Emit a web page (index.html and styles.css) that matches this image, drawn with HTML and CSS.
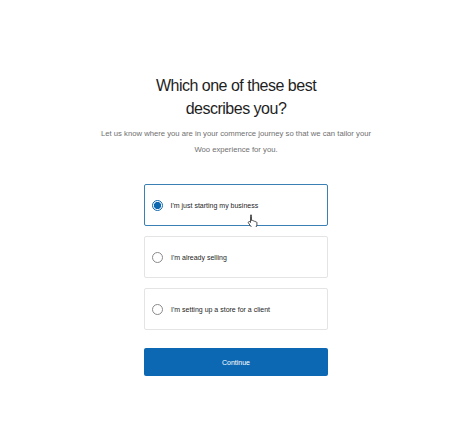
FILE: index.html
```html
<!DOCTYPE html>
<html lang="en">

<head>
    <meta charset="UTF-8">
    <meta name="viewport" content="width=device-width, initial-scale=1.0">
    <title>Business Info</title>
    <link rel="stylesheet" href="styles.css">
</head>

<body>
    <!-- 질문 박스 -->
    <div class="wrap">
        <h1 class="title">Which one of these best<br>describes you?</h1>
        <p class="desc">Let us know where you are in your commerce journey so that we can tailor your<br>Woo experience for you.</p>

        <!-- 선택지 -->
        <div class="choices">
            <label class="choice on">
                <input type="radio" name="stage" checked>
                <span class="dot"></span>
                <span class="label">I'm just starting my business</span>
                <!-- 마우스 커서 -->
                <svg class="cursor" width="12" height="13" viewBox="0 0 12 13">
                    <path d="M3.5 1.2c.6 0 1 .4 1 1v4.3l.4-.1c.5-.2 1 .1 1.2.5.5-.3 1.1-.1 1.3.4.5-.3 1.2 0 1.3.6.6-.2 1.2.2 1.2.9v2.2c0 1.5-1.2 2.7-2.7 2.7H6c-.9 0-1.6-.4-2.1-1.1L1.5 9c-.4-.5-.2-1.2.4-1.4.4-.2.8 0 1.1.3l.5.6V2.2c0-.6.4-1 1-1z" fill="#fff" stroke="#222" stroke-width=".8" stroke-linejoin="round"/>
                </svg>
            </label>
            <label class="choice">
                <input type="radio" name="stage">
                <span class="dot"></span>
                <span class="label">I'm already selling</span>
            </label>
            <label class="choice">
                <input type="radio" name="stage">
                <span class="dot"></span>
                <span class="label">I'm setting up a store for a client</span>
            </label>
        </div>

        <button class="next">Continue</button>
    </div>
</body>

</html>
```

FILE: styles.css
```css
html,
body {
    margin: 0;
    padding: 0;
    background: #fff;
    font-family: "Liberation Sans", Arial, sans-serif;
}

/* 전체 박스 */
.wrap {
    display: flex;
    flex-direction: column;
    align-items: center;
    padding-top: 74px;
    text-align: center;
}

/* 제목 */
.title {
    margin: 0;
    font-size: 16px;
    line-height: 23px;
    font-weight: 400;
    color: #1e1e1e;
    letter-spacing: -0.5px;
}

/* 설명글 */
.desc {
    margin: 6px 0 0;
    font-size: 7.7px;
    line-height: 16px;
    color: #6f6f6f;
}

/* 선택지 목록 */
.choices {
    display: flex;
    flex-direction: column;
    gap: 10px;
    width: 184px;
    margin-top: 26px;
}

.choice {
    position: relative;
    display: flex;
    align-items: center;
    gap: 8px;
    height: 42px;
    box-sizing: border-box;
    padding-left: 7px;
    border: 1px solid #e4e4e4;
    border-radius: 2px;
    text-align: left;
    cursor: pointer;
}

/* 선택된 카드 */
.choice.on {
    border: 1.5px solid #3a80b5;
    padding-left: 6.5px;
}

.choice input {
    display: none;
}

/* 라디오 동그라미 */
.dot {
    width: 11px;
    height: 11px;
    box-sizing: border-box;
    border: 1px solid #8a8a8a;
    border-radius: 50%;
    flex-shrink: 0;
}

.choice.on .dot {
    border: 1.5px solid #0d68b0;
    background: radial-gradient(circle, #0d68b0 0 3.4px, #fff 3.8px);
}

.label {
    font-size: 7px;
    color: #1e1e1e;
}

/* 커서 */
.cursor {
    position: absolute;
    left: 102px;
    top: 29px;
}

/* 계속 버튼 */
.next {
    width: 184px;
    height: 28px;
    margin-top: 18px;
    border: 0;
    border-radius: 2px;
    background: #0d68b4;
    color: #fff;
    font-family: inherit;
    font-size: 7px;
    cursor: pointer;
}
```
